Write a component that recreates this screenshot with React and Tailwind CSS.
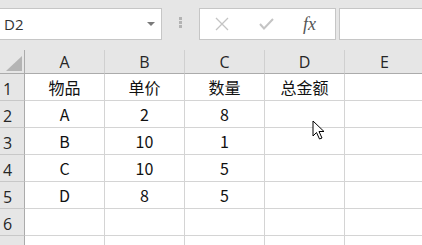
import React from 'react';

const cols = ['A', 'B', 'C', 'D', 'E'];
const rows = [
  ['物品', '单价', '数量', '总金额', ''],
  ['A', '2', '8', '', ''],
  ['B', '10', '1', '', ''],
  ['C', '10', '5', '', ''],
  ['D', '8', '5', '', ''],
  ['', '', '', '', ''],
  ['', '', '', '', ''],
];

const cellFont = { fontFamily: '"Noto Sans CJK SC", "Noto Sans", sans-serif' };

function App() {
  return (
    <div className="relative w-[422px] h-[245px] overflow-hidden bg-[#e6e6e6]" style={cellFont}>
      {/* formula bar */}
      <div className="flex h-[50px] pt-[8px]">
        <div className="flex items-center justify-between w-[162px] h-[32px] bg-white border border-l-0 border-[#c6c6c6] pl-[4px] pr-[6px]">
          <span className="text-[15px] text-[#333] font-['Open_Sans',sans-serif]">D2</span>
          <span className="w-0 h-0 border-l-[4px] border-r-[4px] border-t-[4px] border-l-transparent border-r-transparent border-t-[#7a7a7a]" />
        </div>
        <div className="flex flex-col items-center gap-[1px] w-[37px] pt-[9px]">
          <span className="w-[3px] h-[3px] bg-[#b3b3b3]" />
          <span className="w-[3px] h-[3px] bg-[#b3b3b3]" />
          <span className="w-[3px] h-[3px] bg-[#b3b3b3]" />
        </div>
        <div className="flex items-center w-[137px] h-[32px] bg-white border border-[#c6c6c6]">
          <svg width="14" height="14" viewBox="0 0 14 14" className="ml-[15px]">
            <path d="M1 1 L13 13 M13 1 L1 13" stroke="#c4c4c4" strokeWidth="1.3" fill="none" />
          </svg>
          <svg width="15" height="12" viewBox="0 0 15 12" className="ml-[30px]">
            <path d="M1 6 L5 10.5 L14 1" stroke="#c4c4c4" strokeWidth="2" fill="none" />
          </svg>
          <span className="ml-[29px] text-[18px] italic text-[#555] leading-none font-['Liberation_Serif',serif]">fx</span>
        </div>
        <div className="ml-[3px] flex-1 h-[32px] bg-white border border-r-0 border-[#c6c6c6]" />
      </div>

      {/* sheet grid */}
      <div className="grid grid-cols-[25px_80px_80px_80px_80px_80px]">
        <div className="relative h-[24px] bg-[#e6e6e6] border-r border-b border-[#ababab]">
          <svg width="17" height="15" viewBox="0 0 17 15" className="absolute left-[6px] top-[6px]">
            <path d="M16 0 L16 15 L0 15 Z" fill="#b4b4b4" />
          </svg>
        </div>
        {cols.map((c) => (
          <div
            key={c}
            className="flex items-end justify-center pb-[1px] h-[24px] bg-[#e6e6e6] border-r border-b border-r-[#d0d0d0] border-b-[#ababab] text-[16px] leading-[20px] text-[#262626] font-['Open_Sans',sans-serif]"
          >
            {c}
          </div>
        ))}
        {rows.map((r, i) => (
          <React.Fragment key={i}>
            <div className="flex items-center pl-[3px] pt-[3px] h-[27px] bg-[#e6e6e6] border-r border-b border-r-[#ababab] border-b-[#c8c8c8] text-[16px] text-[#262626] font-['Open_Sans',sans-serif]">
              {i < 6 ? i + 1 : ''}
            </div>
            {r.map((v, j) => (
              <div
                key={j}
                className="flex items-center justify-center h-[27px] bg-white border-r border-b border-[#d4d4d4] text-[16px] text-[#111]"
              >
                {v}
              </div>
            ))}
          </React.Fragment>
        ))}
      </div>

      {/* mouse pointer */}
      <svg width="14" height="21" viewBox="0 0 14 21" className="absolute left-[312px] top-[120px]">
        <path d="M1 1 L1 16 L4.5 12.5 L7.5 19 L10 18 L7 11.5 L12 11.5 Z" fill="#fff" stroke="#000" strokeWidth="1" strokeLinejoin="round" />
      </svg>
    </div>
  );
}

export default App;
